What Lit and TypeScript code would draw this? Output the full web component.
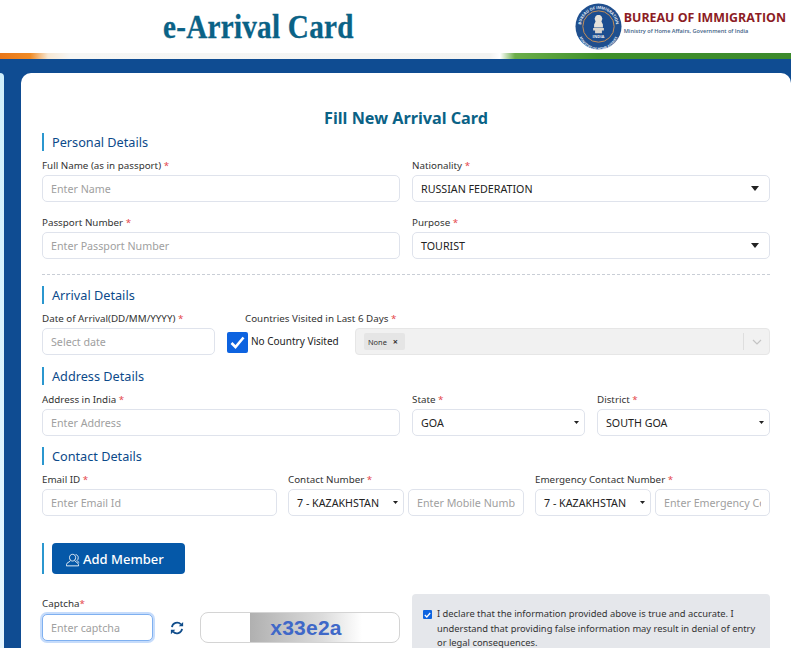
import { LitElement, html, css } from "lit";
import { customElement } from "lit/decorators.js";

const caret = (cls: string) => html`<svg class=${cls} viewBox="0 0 10 6"><path d="M0 0h10L5 6z" fill="#222"/></svg>`;

@customElement("app-root")
export class AppRoot extends LitElement {
  static styles = css`
    :host { display: block; width: 791px; height: 648px; overflow: hidden; background: #fff; font-family: "Noto Sans", sans-serif; color: #333; }
    * { box-sizing: border-box; }
    .top { height: 53px; display: flex; align-items: center; justify-content: space-between; padding: 0 5px 0 163px; }
    .title { margin: 0; font: bold 34px/1 "Liberation Serif", serif; color: #0a6286; letter-spacing: .3px; transform: scaleX(.858); transform-origin: left center; white-space: nowrap; width: 191px; -webkit-text-stroke: .3px #0a6286; }
    .brand { display: flex; align-items: center; gap: 2px; }
    .brand svg { width: 47px; height: 47px; display: block; }
    .brand-text { margin-top: -8px; }
    .brand-text b { display: block; font: bold 12.4px/14px "Open Sans", sans-serif; color: #8c1c24; white-space: nowrap; }
    .brand-text span { display: block; margin-top: 2px; font: 600 5.6px/8px "Open Sans", sans-serif; color: #3f5f86; white-space: nowrap; }
    .strip { height: 6px; background: linear-gradient(90deg, #e8771a 0, #f08a24 30px, #f7e8d4 48px, #f6f6f4 70px, #f3f3f1 490px, #fff 500px, #6cae4a 515px, #3f8f2a 600px, #3d8a2c 100%); }
    .band { background: #0f4c92; padding-top: 14px; display: flex; height: 589px; }
    .side { width: 4px; background: linear-gradient(#cfeffc, #e6f6ff); border-top-right-radius: 5px; margin-right: 17px; }
    .card { width: 770px; background: #fff; border-top-left-radius: 10px; border-top-right-radius: 10px; padding: 35px 21px 0; }
    h1 { margin: 0; font: bold 16.2px/20px "Noto Sans", sans-serif; color: #0a6286; text-align: center; }
    .sec { border-left: 2px solid #2b97cf; height: 18px; padding-left: 8px; font-size: 12.7px; line-height: 18px; color: #0b4a8a; }
    .sec.a { margin-top: 5px; }
    .row { display: flex; }
    .gap12 { gap: 12px; }
    .f { display: flex; flex-direction: column; }
    label, .lbl { font-size: 9.8px; line-height: 15px; color: #333; height: 13px; margin-bottom: 4px; white-space: nowrap; display: block; }
    label i, .lbl i { font-style: normal; color: #e5484d; }
    input, .sel { height: 27px; border: 1px solid #dfe3ec; border-radius: 5px; font: 10.7px "Noto Sans", sans-serif; padding: 0 8px; background: #fff; color: #222; width: 100%; outline: none; }
    input::placeholder { color: #a0a0a0; opacity: 1; }
    .sel { display: flex; align-items: center; justify-content: space-between; white-space: nowrap; }
    .big { width: 8px; height: 5px; flex: none; margin-right: 2px; }
    .small { width: 5px; height: 3px; flex: none; margin-right: -3px; }
    .w358 { width: 358px; }
    .w173 { width: 173px; }
    .dash { border-top: 1px dashed #c9ced6; margin-top: 15px; margin-bottom: 11px; height: 0; }
    .check { width: 21px; height: 21px; background: #0d63e0; border-radius: 2px; margin: 4px 3px 0 0; flex: none; display: flex; align-items: center; justify-content: center; }
    .check svg { width: 15px; height: 13px; }
    .nc { font-size: 10px; line-height: 27px; white-space: nowrap; color: #222; width: 88px; }
    .multi { width: 415px; height: 27px; margin-left: 16px; background: #f1f1f1; border: 1px solid #e6e6e6; border-radius: 4px; display: flex; align-items: center; padding-left: 8px; }
    .chip { width: 41px; height: 17px; background: #e5e5e5; border-radius: 2px; font-size: 7.4px; display: flex; align-items: center; gap: 6px; padding-left: 4px; color: #333; }
    .chip b { font-size: 9px; font-weight: 700; }
    .ind { margin-left: auto; height: 17px; border-left: 1px solid #dedede; width: 26px; display: flex; align-items: center; justify-content: center; }
    .ind svg { width: 10px; height: 6px; }
    .phone { display: flex; gap: 4px; }
    .phone .sel { width: 116px; flex: none; }
    .addrow { margin-top: 27px; border-left: 2px solid #2b97cf; height: 31px; padding-left: 8px; }
    .add { width: 133px; height: 31px; border: 0; background: #0558a8; color: #fff; border-radius: 4px; font: 500 13px "Noto Sans", sans-serif; display: flex; align-items: center; gap: 3px; padding: 0 0 0 14px; }
    .add svg { width: 14px; height: 14px; margin-top: 3px; }
    .bottom { display: flex; margin-top: 20px; gap: 12px; }
    .left { width: 358px; padding-top: 3px; }
    .left .lbl { margin-bottom: 2px; line-height: 13px; }
    .capt { display: flex; align-items: center; }
    .capt input { width: 111px; border: 1px solid #7fb0f0; box-shadow: 0 0 0 2px #c6dcfb; }
    .ref { width: 14px; height: 14px; margin: 0 16px 0 17px; flex: none; }
    .cbox { width: 200px; height: 31px; border: 1px solid #d4d4d4; border-radius: 8px; overflow: hidden; padding: 0 37px 0 49px; flex: none; }
    .cimg { height: 100%; background: linear-gradient(90deg, #b0b0b0, #dcdcdc 65%, #fff); font: bold 21px/30px "Liberation Sans", sans-serif; color: #3f68c8; text-align: center; letter-spacing: .2px; }
    .decl { width: 358px; height: 70px; background: #e5e7eb; border-radius: 4px; padding: 13px 12px 0 11px; display: flex; gap: 5px; font-size: 9.35px; line-height: 14.6px; color: #333; }
    .mini { width: 9px; height: 9px; background: #0d63e0; border-radius: 1px; flex: none; margin-top: 3px; display: flex; align-items: center; justify-content: center; }
    .mini svg { width: 7px; height: 6px; }
    .seal-ring { font: 700 4px "Open Sans", sans-serif; fill: #e6ecf5; text-anchor: middle; }
    .seal-low { font: 700 3.5px "Open Sans", sans-serif; fill: #e6ecf5; text-anchor: middle; }
    .seal-india { font: 700 4.2px "Open Sans", sans-serif; fill: #eee; text-anchor: middle; }
  `;

  private sel(v: string, c = "small") {
    return html`<div class="sel"><span>${v}</span>${caret(c)}</div>`;
  }

  render() {
    return html`
      <header class="top">
        <h2 class="title">e-Arrival Card</h2>
        <div class="brand">
          <svg viewBox="0 0 48 48">
            <defs>
              <path id="ringTop" d="M6 24a18 18 0 0 1 36 0"/>
              <path id="ringBot" d="M3 27a21 21 0 0 0 42 0"/>
            </defs>
            <circle cx="24" cy="24" r="23.500" fill="#1f4f8e"/>
            <circle cx="24" cy="24" r="16" fill="#1c4d8f" stroke="#c98f55" stroke-width="1"/>
            <text class="seal-ring"><textPath href="#ringTop" startOffset="50%">BUREAU OF IMMIGRATION</textPath></text>
            <text class="seal-low"><textPath href="#ringBot" startOffset="50%">MINISTRY OF HOME AFFAIRS</textPath></text>
            <path d="M21 13.500c.8-1 1.500-1.300 3-1.300s2.200.3 3 1.300l1 2.500-1 3 1.500 3v3h-9v-3l1.500-3-1-3z" fill="#e6e2da"/>
            <path d="M18.500 25.500h11v2.500h-11zM20.500 28h7v3h-7z" fill="#d9d5ce"/>
            <text class="seal-india" x="24" y="36">INDIA</text>
          </svg>
          <div class="brand-text"><b>BUREAU OF IMMIGRATION</b><span>Ministry of Home Affairs, Government of India</span></div>
        </div>
      </header>
      <div class="strip"></div>
      <div class="band">
        <div class="side"></div>
        <main class="card">
          <h1>Fill New Arrival Card</h1>
          <div class="sec a">Personal Details</div>
          <div class="row gap12" style="margin-top:7px">
            <div class="f w358"><label>Full Name (as in passport) <i>*</i></label><input placeholder="Enter Name"></div>
            <div class="f w358"><label>Nationality <i>*</i></label>${this.sel("RUSSIAN FEDERATION", "big")}</div>
          </div>
          <div class="row gap12" style="margin-top:13px">
            <div class="f w358"><label>Passport Number <i>*</i></label><input placeholder="Enter Passport Number"></div>
            <div class="f w358"><label>Purpose <i>*</i></label>${this.sel("TOURIST", "big")}</div>
          </div>
          <div class="dash"></div>
          <div class="sec">Arrival Details</div>
          <div class="row" style="margin-top:7px">
            <div class="f" style="width:173px;margin-right:12px"><label>Date of Arrival(DD/MM/YYYY) <i>*</i></label><input placeholder="Select date"></div>
            <div>
              <div class="lbl" style="margin-left:18px">Countries Visited in Last 6 Days <i>*</i></div>
              <div class="row">
                <div class="check"><svg viewBox="0 0 15 13"><path d="M1.500 7l4 4 8-9.500" fill="none" stroke="#fff" stroke-width="2.600"/></svg></div>
                <div class="nc">No Country Visited</div>
                <div class="multi"><div class="chip"><span>None</span><b>×</b></div><div class="ind"><svg viewBox="0 0 10 6"><path d="M1 1l4 4 4-4" fill="none" stroke="#c4c4c4" stroke-width="1.200"/></svg></div></div>
              </div>
            </div>
          </div>
          <div class="sec" style="margin-top:12px">Address Details</div>
          <div class="row gap12" style="margin-top:7px">
            <div class="f w358"><label>Address in India <i>*</i></label><input placeholder="Enter Address"></div>
            <div class="f w173"><label>State <i>*</i></label>${this.sel("GOA")}</div>
            <div class="f w173"><label>District <i>*</i></label>${this.sel("SOUTH GOA")}</div>
          </div>
          <div class="sec" style="margin-top:11px">Contact Details</div>
          <div class="row" style="margin-top:7px">
            <div class="f" style="width:235px;margin-right:11px"><label>Email ID <i>*</i></label><input placeholder="Enter Email Id"></div>
            <div class="f" style="width:236px;margin-right:11px"><label>Contact Number <i>*</i></label>
              <div class="phone">${this.sel("7 - KAZAKHSTAN")}<input placeholder="Enter Mobile Number"></div></div>
            <div class="f" style="width:235px"><label>Emergency Contact Number <i>*</i></label>
              <div class="phone">${this.sel("7 - KAZAKHSTAN")}<input placeholder="Enter Emergency Contact"></div></div>
          </div>
          <div class="addrow">
            <button class="add">
              <svg viewBox="0 0 16 16" fill="none" stroke="#fff" stroke-width="1"><path d="M7.500 1.500c2.200 0 3.500 1.600 3.500 3.700s-1.300 4-3.500 4-3.500-1.900-3.500-4 1.300-3.700 3.500-3.700z"/><path d="M5 8.500c-.2 1.600-2.800 2-3.800 3.200-.7.800-.8 2-.8 3h14c0-1-.1-2.200-.8-3-1-1.200-3.400-1.600-3.600-3.200"/><path d="M11 1.800c2 .3 3 1.800 3 3.500 0 1.500-.5 2.700-1.500 3.400.3.900 1.700 1.400 2.600 2.300"/></svg>
              Add Member
            </button>
          </div>
          <div class="bottom">
            <div class="left">
              <div class="lbl">Captcha<i>*</i></div>
              <div class="capt">
                <input placeholder="Enter captcha">
                <svg class="ref" viewBox="0 0 16 16" fill="none" stroke="#0f4c8a" stroke-width="2"><path d="M2.200 7a6 6 0 0 1 10.300-3.200"/><path d="M13.800 9a6 6 0 0 1-10.300 3.200"/><path d="M15 1v5h-5z" fill="#0f4c8a" stroke="none"/><path d="M1 15v-5h5z" fill="#0f4c8a" stroke="none"/></svg>
                <div class="cbox"><div class="cimg">x33e2a</div></div>
              </div>
            </div>
            <div class="decl">
              <div class="mini"><svg viewBox="0 0 7 6"><path d="M.8 3l2 2L6.200 1" fill="none" stroke="#fff" stroke-width="1.300"/></svg></div>
              <div>I declare that the information provided above is true and accurate. I understand that providing false information may result in denial of entry or legal consequences.</div>
            </div>
          </div>
        </main>
      </div>
    `;
  }
}
